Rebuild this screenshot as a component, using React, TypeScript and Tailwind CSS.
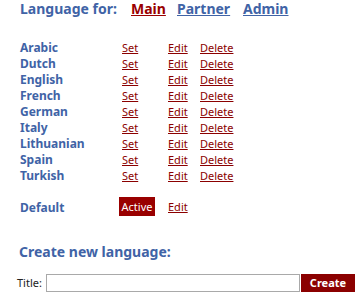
const languages = [
  "Arabic",
  "Dutch",
  "English",
  "French",
  "German",
  "Italy",
  "Lithuanian",
  "Spain",
  "Turkish",
];

export default function App() {
  return (
    <div className="w-[361px] h-[297px] bg-white font-['Noto_Sans',sans-serif] overflow-hidden">
      <div className="pl-[20px] flex items-center h-[18px] leading-[18px] text-[14px] font-bold">
        <span className="text-[#4063a6] w-[111px]">Language for:</span>
        <a href="#" className="text-[#990000] underline w-[46px]">Main</a>
        <a href="#" className="text-[#4063a6] underline w-[66px]">Partner</a>
        <a href="#" className="text-[#4063a6] underline">Admin</a>
      </div>

      <div className="mt-[22px] pl-[20px]">
        {languages.map((lang) => (
          <div key={lang} className="flex h-[16px] leading-[16px]">
            <span className="w-[102px] text-[12px] font-bold text-[#4063a6]">{lang}</span>
            <a href="#" className="w-[46px] text-[11px] text-[#8b0000] underline">Set</a>
            <a href="#" className="w-[32px] text-[11px] text-[#8b0000] underline">Edit</a>
            <a href="#" className="text-[11px] text-[#8b0000] underline">Delete</a>
          </div>
        ))}
      </div>

      <div className="mt-[13px] pl-[20px] flex items-center h-[19px]">
        <span className="w-[99px] mt-[2px] text-[12px] leading-[16px] font-bold text-[#4063a6]">Default</span>
        <span className="w-[36px] h-[19px] bg-[#990000] text-white text-[11px] leading-[19px] text-center">Active</span>
        <a href="#" className="ml-[13px] mt-[1px] text-[11px] leading-[16px] text-[#8b0000] underline">Edit</a>
      </div>

      <div className="mt-[27px] pl-[19px] h-[18px] leading-[18px] text-[14px] font-bold text-[#4063a6]">
        Create new language:
      </div>

      <div className="mt-[13px] pl-[17px] flex items-center">
        <span className="w-[29px] text-[11px] text-[#222]">Title:</span>
        <input type="text" className="w-[254px] h-[18px] border border-[#a9a9a9] bg-white outline-none" />
        <button className="ml-[1px] w-[54px] h-[18px] bg-[#8b0000] text-white text-[11px] font-bold leading-[18px]">
          Create
        </button>
      </div>
    </div>
  );
}
